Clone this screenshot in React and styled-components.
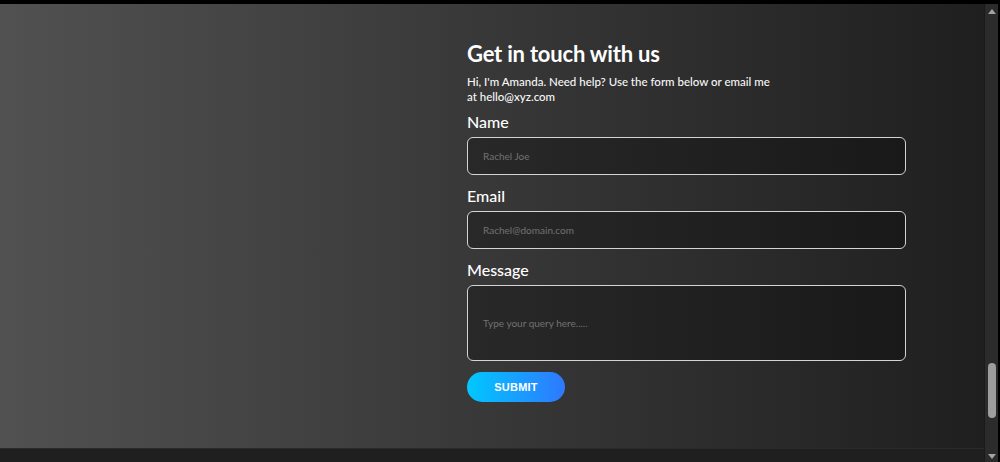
import React from 'react'
import styled, { createGlobalStyle } from 'styled-components'

const GlobalStyle = createGlobalStyle`
  html, body {
    margin: 0;
    padding: 0;
    background: #000;
    overflow: hidden;
  }
  * {
    box-sizing: border-box;
  }
`

const Frame = styled.div`
  width: 1000px;
  height: 462px;
  display: flex;
  flex-direction: column;
  background: #000;
  font-family: Lato, 'Noto Sans', sans-serif;
`

const TopEdge = styled.div`
  height: 4px;
  flex: none;
  background: #000;
`

const Body = styled.div`
  flex: 1;
  display: flex;
`

const Viewport = styled.div`
  flex: 1;
  display: flex;
  flex-direction: column;
`

const Section = styled.section`
  height: 444px;
  display: flex;
  background: linear-gradient(to right, #515151 0%, #3a3a3a 45%, #1f1f1f 100%);
`

const Spacer = styled.div`
  flex: 0 0 467px;
`

const FormColumn = styled.form`
  width: 439px;
  padding-top: 35px;
  display: flex;
  flex-direction: column;
  color: #fff;
`

const Title = styled.h2`
  margin: 0;
  font-size: 22px;
  line-height: 30px;
  font-weight: 700;
  letter-spacing: -0.2px;
`

const Intro = styled.p`
  margin: 5px 0 0;
  width: 306px;
  font-size: 11.5px;
  line-height: 15px;
  font-weight: 500;
  color: #f7f7f7;
`

const Field = styled.label`
  display: flex;
  flex-direction: column;
  margin-top: ${p => p.$first ? '8px' : '11px'};
`

const Label = styled.span`
  font-size: 16px;
  line-height: 20px;
  font-weight: 500;
  margin-bottom: 5px;
`

const Input = styled.input`
  height: 38px;
  width: 100%;
  padding: 0 15px;
  border: 1px solid #d4d4d4;
  border-radius: 6px;
  background: rgba(0, 0, 0, 0.28);
  color: #fff;
  font-family: inherit;
  font-size: 10px;
  outline: none;
  &::placeholder {
    color: #727272;
  }
`

const TextArea = styled.textarea`
  height: 76px;
  width: 100%;
  padding: 31px 15px 0;
  border: 1px solid #d4d4d4;
  border-radius: 6px;
  background: rgba(0, 0, 0, 0.28);
  color: #fff;
  font-family: inherit;
  font-size: 10px;
  resize: none;
  outline: none;
  display: block;
  &::placeholder {
    color: #727272;
  }
`

const Submit = styled.button`
  margin-top: 11px;
  width: 98px;
  height: 30px;
  border: none;
  border-radius: 15px;
  background: linear-gradient(to right, #00c8ff, #2f78ff);
  color: #fff;
  font-family: 'Liberation Sans', Arial, sans-serif;
  font-size: 11px;
  font-weight: 700;
  letter-spacing: 0.2px;
  cursor: pointer;
`

const BottomStrip = styled.div`
  flex: 1;
  background: #1f1f1f;
  border-top: 1px solid #2b2b2b;
`

const ScrollTrack = styled.div`
  width: 14px;
  display: flex;
  flex-direction: column;
  align-items: center;
  background: #2b2b2b;
  border-left: 1px solid #1a1a1a;
  padding: 5px 0 3px;
`

const Arrow = styled.div`
  width: 0;
  height: 0;
  border-left: 4px solid transparent;
  border-right: 4px solid transparent;
  ${p => p.$down
    ? 'border-top: 5px solid #a3a3a3;'
    : 'border-bottom: 5px solid #a3a3a3;'}
`

const ThumbRail = styled.div`
  flex: 1;
  display: flex;
  flex-direction: column;
  justify-content: flex-end;
  padding-bottom: 36px;
`

const Thumb = styled.div`
  width: 8px;
  height: 55px;
  border-radius: 4px;
  background: #9d9d9d;
`

const RightEdge = styled.div`
  width: 2px;
  background: #000;
`

export default function App() {
  return (
    <>
      <GlobalStyle />
      <Frame>
        <TopEdge />
        <Body>
          <Viewport>
            <Section>
              <Spacer />
              <FormColumn onSubmit={e => e.preventDefault()}>
                <Title>Get in touch with us</Title>
                <Intro>
                  Hi, I'm Amanda. Need help? Use the form below or email me
                  at hello@xyz.com
                </Intro>
                <Field $first>
                  <Label>Name</Label>
                  <Input type="text" placeholder="Rachel Joe" />
                </Field>
                <Field>
                  <Label>Email</Label>
                  <Input type="email" placeholder="Rachel@domain.com" />
                </Field>
                <Field>
                  <Label>Message</Label>
                  <TextArea placeholder="Type your query here....." />
                </Field>
                <div>
                  <Submit type="submit">SUBMIT</Submit>
                </div>
              </FormColumn>
            </Section>
            <BottomStrip />
          </Viewport>
          <ScrollTrack>
            <Arrow />
            <ThumbRail>
              <Thumb />
            </ThumbRail>
            <Arrow $down />
          </ScrollTrack>
          <RightEdge />
        </Body>
      </Frame>
    </>
  )
}
